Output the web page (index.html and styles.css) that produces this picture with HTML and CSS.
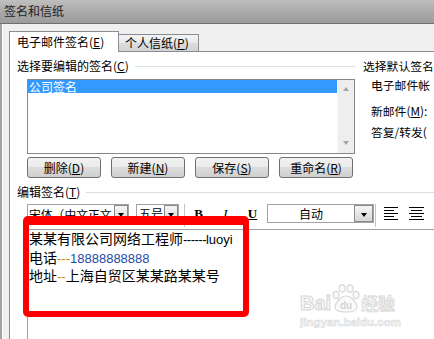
FILE: index.html
```html
<!DOCTYPE html>
<html lang="zh-CN">

<head>
    <meta charset="UTF-8">
    <title>签名和信纸</title>
    <link rel="stylesheet" href="styles.css">
</head>

<body>
    <div class="titlebar">签名和信纸</div>

    <div class="window">
        <div class="frame"></div>
        <div class="dialog">
            <!-- Tabs -->
            <div class="tabs">
                <div class="tab active">电子邮件签名(<u>E</u>)</div>
                <div class="tab other">个人信纸(<u>P</u>)</div>
            </div>

            <div class="panel">
                <div class="upper">
                    <div class="left-col">
                        <div class="group-head">
                            <span>选择要编辑的签名(<u>C</u>)</span>
                            <i class="rule"></i>
                        </div>
                        <div class="listbox">
                            <div class="list-items">
                                <div class="item selected">公司签名</div>
                            </div>
                            <div class="scrollbar">
                                <span class="arrow up"></span>
                                <span class="arrow down"></span>
                            </div>
                        </div>
                        <div class="buttons">
                            <div class="btn">删除(<u>D</u>)</div>
                            <div class="btn">新建(<u>N</u>)</div>
                            <div class="btn">保存(<u>S</u>)</div>
                            <div class="btn">重命名(<u>R</u>)</div>
                        </div>
                    </div>

                    <!-- right column is cut by the window edge -->
                    <div class="right-col">
                        <div>选择默认签名</div>
                        <div class="sub first">电子邮件帐</div>
                        <div class="sub second">新邮件(<u>M</u>):</div>
                        <div class="sub third">答复/转发(</div>
                    </div>
                </div>

                <!-- Edit signature -->
                <div class="group-head edit-head">
                    <span>编辑签名(<u>T</u>)</span>
                    <i class="rule"></i>
                </div>

                <div class="toolbar">
                    <div class="combo font-combo">
                        <span class="value">宋体（中文正文</span>
                        <span class="drop"><i class="tri"></i></span>
                    </div>
                    <div class="combo size-combo">
                        <span class="value">五号</span>
                        <span class="drop"><i class="tri"></i></span>
                    </div>
                    <span class="sep"></span>
                    <span class="fmt bold">B</span>
                    <span class="fmt italic">I</span>
                    <span class="fmt under">U</span>
                    <div class="combo color-combo">
                        <span class="value">自动</span>
                        <span class="drop big"><i class="tri"></i></span>
                    </div>
                    <span class="sep second"></span>
                    <svg class="align left" width="14" height="13" viewBox="0 0 14 13">
                        <path d="M0 .5h14M0 3.5h10M0 6.5h14M0 9.5h10M0 12.5h14" stroke="#000" stroke-width="1" />
                    </svg>
                    <svg class="align center" width="15" height="13" viewBox="0 0 15 13">
                        <path d="M0 .5h15M2 3.5h11M0 6.5h15M2 9.5h11M0 12.5h15" stroke="#000" stroke-width="1" />
                    </svg>
                </div>

                <div class="editor">
                    <div>某某有限公司网络工程师<span class="latin tight">------</span><span class="latin">luoyi</span></div>
                    <div>电话<span class="latin dash">---</span><span class="latin num">18888888888</span></div>
                    <div>地址<span class="latin dash">--</span>上海自贸区某某路某某号</div>
                </div>
            </div>
        </div>
    </div>

    <!-- red annotation drawn over the screenshot -->
    <div class="annotation"></div>

    <div class="watermark">
        <div class="mark-row">
            <span class="bai">Bai</span>
            <svg width="30" height="29" viewBox="0 0 30 29">
                <g fill="#fafafa" stroke="#d8d8d8" stroke-width="1.2">
                    <ellipse cx="5" cy="11" rx="3" ry="3.6" />
                    <ellipse cx="11" cy="4.5" rx="3" ry="3.6" />
                    <ellipse cx="19" cy="4.5" rx="3" ry="3.6" />
                    <ellipse cx="25" cy="11" rx="3" ry="3.6" />
                    <path d="M15 12c-5 0-11 7-11 11 0 4 4 5 11 5s11-1 11-5c0-4-6-11-11-11z" />
                </g>
                <text x="15" y="25" text-anchor="middle" font-family="Liberation Sans" font-weight="bold" font-size="10" fill="#d2d2d2">du</text>
            </svg>
            <span class="jy">经验</span>
        </div>
        <div class="url">jingyan.baidu.com</div>
    </div>
</body>

</html>
```

FILE: styles.css
```css
body {
    margin: 0;
    width: 434px;
    height: 339px;
    overflow: hidden;
    position: relative;
    background: #f0f0f0;
    color: #000;
    font: 12px/14px "Noto Sans CJK SC", "Liberation Sans", sans-serif;
}

u {
    text-decoration: underline;
}

.titlebar {
    height: 23px;
    line-height: 21px;
    padding-left: 4px;
    color: #1e1e1e;
    background: linear-gradient(#bfbfbf, #a8a8a8 55%, #9d9d9d);
    border-bottom: 1px solid #6f6f6f;
}

.window {
    display: flex;
    height: 315px;
}

.frame {
    width: 9px;
    flex: none;
    box-sizing: border-box;
    border-left: 2px solid #a4a4a4;
    box-shadow: inset 1px 0 0 #fdfdfd;
}

.dialog {
    flex: 1;
    min-width: 0;
    display: flex;
    flex-direction: column;
}

/* tabs */
.tabs {
    display: flex;
    align-items: flex-end;
    padding-top: 7px;
    white-space: nowrap;
}

.tab {
    box-sizing: border-box;
    border: 1px solid #898c95;
    border-bottom: none;
}

.tab.active {
    width: 110px;
    height: 21px;
    line-height: 20px;
    padding-left: 7px;
    margin-bottom: -1px;
    background: #fff;
    position: relative;
    z-index: 1;
}

.tab.other {
    width: 81px;
    height: 17px;
    line-height: 16px;
    padding-left: 6px;
    margin-left: -1px;
    background: linear-gradient(#f4f4f4, #e9e9e9 50%, #dcdcdc 50%, #d3d3d3);
}

.panel {
    flex: 1;
    background: #fff;
    border-left: 1px solid #898c95;
    border-top: 1px solid #898c95;
    padding: 7px 0 0 7px;
}

.upper {
    display: flex;
}

.left-col {
    width: 338px;
    flex: none;
}

.group-head {
    display: flex;
    align-items: center;
    height: 14px;
    white-space: nowrap;
}

.rule {
    flex: 1;
    height: 1px;
    margin-left: 6px;
    background: #d5dfe5;
}

/* list */
.listbox {
    display: flex;
    width: 328px;
    height: 75px;
    margin: 6px 0 0 10px;
    box-sizing: border-box;
    border: 1px solid #828790;
}

.list-items {
    flex: 1;
}

.item {
    height: 13px;
    line-height: 13px;
    padding-left: 1px;
}

.item.selected {
    background: #3399ff;
    color: #fff;
}

.scrollbar {
    width: 17px;
    display: flex;
    flex-direction: column;
    justify-content: space-between;
    align-items: center;
    padding: 7px 0 8px;
    background: #eeeeee;
    box-shadow: inset 1px 0 0 #f7f7f7;
}

.arrow {
    width: 0;
    height: 0;
    border-left: 3.5px solid transparent;
    border-right: 3.5px solid transparent;
}

.arrow.up {
    border-bottom: 4px solid #a6a6a6;
}

.arrow.down {
    border-top: 4px solid #a6a6a6;
}

/* buttons */
.buttons {
    display: flex;
    gap: 10px;
    margin: 3px 0 0 10px;
}

.btn {
    width: 74px;
    height: 21px;
    box-sizing: border-box;
    border: 1px solid #707070;
    border-radius: 3px;
    background: linear-gradient(#f2f2f2, #ebebeb 45%, #dddddd 50%, #cfcfcf);
    text-align: center;
    line-height: 19px;
}

.right-col {
    margin-left: 8px;
    white-space: nowrap;
    font-size: 11.8px;
}

.right-col .sub {
    padding-left: 8px;
}

.right-col .first {
    margin-top: 5px;
}

.right-col .second {
    margin-top: 12px;
}

.right-col .third {
    margin-top: 7px;
}

.edit-head {
    margin-top: 7px;
}

/* toolbar */
.toolbar {
    display: flex;
    align-items: center;
    height: 19px;
    margin: 5px 0 0 10px;
}

.combo {
    display: flex;
    height: 19px;
    box-sizing: border-box;
    border: 1px solid #a3a3a3;
    background: #fff;
}

.combo .value {
    flex: 1;
    overflow: hidden;
    white-space: nowrap;
    padding-left: 2px;
    line-height: 17px;
}

.combo .drop {
    width: 14px;
    flex: none;
    box-sizing: border-box;
    border: 1px solid #8a8a8a;
    background: linear-gradient(#f6f6f6, #d6d6d6);
    display: flex;
    align-items: center;
    justify-content: center;
}

.combo .drop.big {
    width: 19px;
}

.tri {
    width: 0;
    height: 0;
    border-left: 3.5px solid transparent;
    border-right: 3.5px solid transparent;
    border-top: 4px solid #000;
    margin-top: 2px;
}

.font-combo {
    width: 102px;
}

.font-combo .value {
    padding-left: 1px;
    font-size: 11.8px;
}

.size-combo {
    width: 43px;
    margin-left: 7px;
}

.color-combo {
    width: 107px;
    margin-left: 1px;
}

.color-combo .value {
    text-align: center;
    padding-left: 0;
}

.sep {
    width: 1px;
    height: 23px;
    align-self: flex-start;
    margin-left: 5px;
    background: #c4c4c4;
}

.sep.second {
    margin-left: 1px;
}

.fmt {
    width: 27px;
    text-align: center;
    font: bold 13px/19px "Liberation Serif", serif;
}

.fmt.italic {
    font-style: italic;
    font-weight: normal;
}

.fmt.under {
    text-decoration: underline;
}

.align.left {
    margin-left: 8px;
}

.align.center {
    margin-left: 11px;
}

/* editor */
.editor {
    flex: 1;
    height: 120px;
    margin: 6px 0 0 10px;
    padding-left: 1px;
    border-left: 1px solid #a0a0a0;
    border-top: 1px solid #a0a0a0;
    font-size: 14px;
    line-height: 17.5px;
    white-space: nowrap;
}

.latin {
    font-family: "Liberation Sans", sans-serif;
    font-size: 13px;
}

.latin.tight {
    letter-spacing: -0.5px;
}

.latin.dash {
    color: #c8860a;
}

.latin.num {
    color: #1f4aa8;
}

/* overlays */
.annotation {
    position: absolute;
    left: 23px;
    top: 216px;
    width: 226px;
    height: 101px;
    box-sizing: border-box;
    border: 6px solid #ff0000;
    border-top-width: 9px;
    border-radius: 5px;
}

.watermark {
    position: absolute;
    left: 300px;
    top: 284px;
    width: 106px;
}

.mark-row {
    display: flex;
    align-items: flex-end;
}

.bai {
    font: bold 20px/20px "Liberation Sans", sans-serif;
    color: #fafafa;
    -webkit-text-stroke: 1px #d6d6d6;
}

.jy {
    font: bold 17px/20px "Noto Sans CJK SC", sans-serif;
    color: #fafafa;
    -webkit-text-stroke: 0.8px #d6d6d6;
}

.url {
    font: bold 11.5px/14px "Liberation Sans", sans-serif;
    color: #f6f6f6;
    -webkit-text-stroke: 0.6px #dadada;
    margin-top: 2px;
}
```
